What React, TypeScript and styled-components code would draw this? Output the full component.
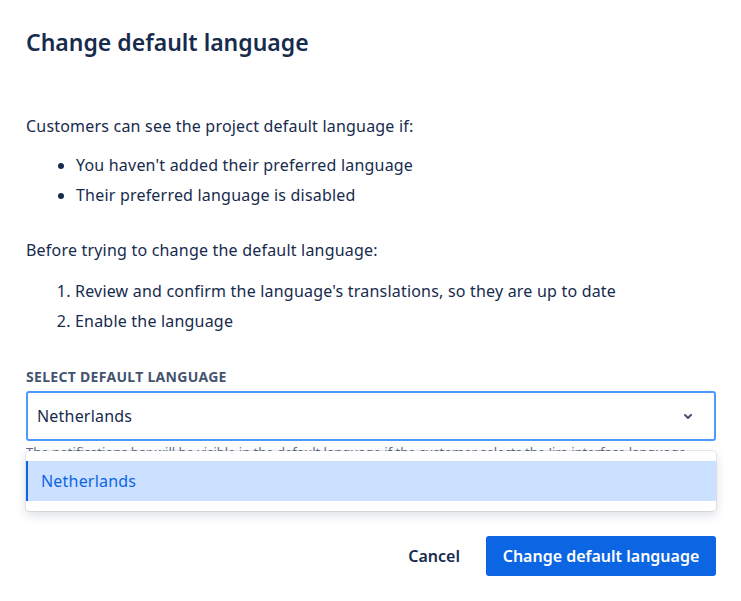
import React from 'react';
import styled, { createGlobalStyle } from 'styled-components';

const GlobalStyle = createGlobalStyle`
  body {
    margin: 0;
    background: #fff;
    font-family: "Noto Sans", "Open Sans", sans-serif;
    color: #172b4d;
  }
`;

const App: React.FC = () => {
  return (
    <>
      <GlobalStyle />
      <Dialog>
        <Title>Change default language</Title>
        <Intro>Customers can see the project default language if:</Intro>
        <Bullets>
          <Item>You haven't added their preferred language</Item>
          <Item>Their preferred language is disabled</Item>
        </Bullets>
        <Intro $gap={31}>Before trying to change the default language:</Intro>
        <Steps>
          <Item>Review and confirm the language's translations, so they are up to date</Item>
          <Item>Enable the language</Item>
        </Steps>

        <Label>Select default language</Label>
        <Field>
          <SelectBox>
            <Value>Netherlands</Value>
            <Chevron width="24" height="24" viewBox="0 0 24 24">
              <path d="M8.3 10.3a1 1 0 0 1 1.4 0L12 12.6l2.3-2.3a1 1 0 1 1 1.4 1.4l-3 3a1 1 0 0 1-1.4 0l-3-3a1 1 0 0 1 0-1.4z" fill="currentColor" />
            </Chevron>
          </SelectBox>
          <Helper>
            The notifications bar will be visible in the default language if the customer selects the Jira interface language.
          </Helper>
          <Menu>
            <Option $selected>Netherlands</Option>
          </Menu>
        </Field>

        <Footer>
          <SubtleButton>Cancel</SubtleButton>
          <PrimaryButton>Change default language</PrimaryButton>
        </Footer>
      </Dialog>
    </>
  );
};

export default App;

const Dialog = styled.div`
  width: 741px;
  height: 601px;
  box-sizing: border-box;
  padding: 28px 25px 0 26px;
`;

const Title = styled.h1`
  margin: 0;
  font-size: 23px;
  line-height: 28px;
  font-weight: 600;
  color: #172b4d;
`;

const Intro = styled.p<{ $gap?: number }>`
  margin: ${(p) => p.$gap ?? 58}px 0 0;
  font-size: 16px;
  line-height: 24px;
  letter-spacing: 0.2px;
`;

const Bullets = styled.ul`
  margin: 15px 0 0;
  padding-left: 50px;
  font-size: 16px;
  line-height: 24px;
  letter-spacing: 0.2px;
`;

const Steps = styled.ol`
  margin: 17px 0 0;
  padding-left: 49px;
  font-size: 16px;
  line-height: 24px;
  letter-spacing: 0.2px;
`;

const Item = styled.li`
  & + & {
    margin-top: 6px;
  }
`;

const Label = styled.div`
  margin-top: 36px;
  font-size: 14px;
  line-height: 16px;
  font-weight: 700;
  letter-spacing: 0.3px;
  text-transform: uppercase;
  color: #44546f;
`;

const Field = styled.div`
  position: relative;
  margin-top: 6px;
`;

const SelectBox = styled.div`
  display: flex;
  align-items: center;
  justify-content: space-between;
  height: 50px;
  box-sizing: border-box;
  padding: 0 14px 0 9px;
  border: 2px solid #4c9aff;
  border-radius: 3px;
  background: #fff;
`;

const Value = styled.span`
  font-size: 16px;
  letter-spacing: 0.2px;
  color: #172b4d;
`;

const Chevron = styled.svg`
  color: #42526e;
`;

const Helper = styled.div`
  margin-top: 1px;
  font-size: 13px;
  line-height: 20px;
  color: #626f86;
  white-space: nowrap;
`;

const Menu = styled.div`
  position: absolute;
  top: 60px;
  left: 0;
  right: 0;
  padding: 10px 0;
  background: #fff;
  border-radius: 4px;
  box-shadow: 0 0 0 1px rgba(9, 30, 66, 0.08), 0 4px 11px rgba(9, 30, 66, 0.15);
`;

const Option = styled.div<{ $selected?: boolean }>`
  display: flex;
  align-items: center;
  height: 40px;
  padding-left: 15px;
  font-size: 16px;
  letter-spacing: 0.2px;
  color: ${(p) => (p.$selected ? '#0c66e4' : '#172b4d')};
  background: ${(p) => (p.$selected ? '#cce0ff' : 'transparent')};
  box-shadow: ${(p) => (p.$selected ? 'inset 2px 0 0 #0c66e4' : 'none')};
`;

const Footer = styled.div`
  display: flex;
  justify-content: flex-end;
  gap: 2px;
  margin-top: 74px;
`;

const SubtleButton = styled.button`
  height: 40px;
  padding: 0 24px;
  border: none;
  border-radius: 3px;
  background: transparent;
  font-family: inherit;
  font-size: 16px;
  font-weight: 600;
  color: #172b4d;
  cursor: pointer;
`;

const PrimaryButton = styled(SubtleButton)`
  width: 230px;
  padding: 0;
  background: #0c66e4;
  color: #fff;
`;
